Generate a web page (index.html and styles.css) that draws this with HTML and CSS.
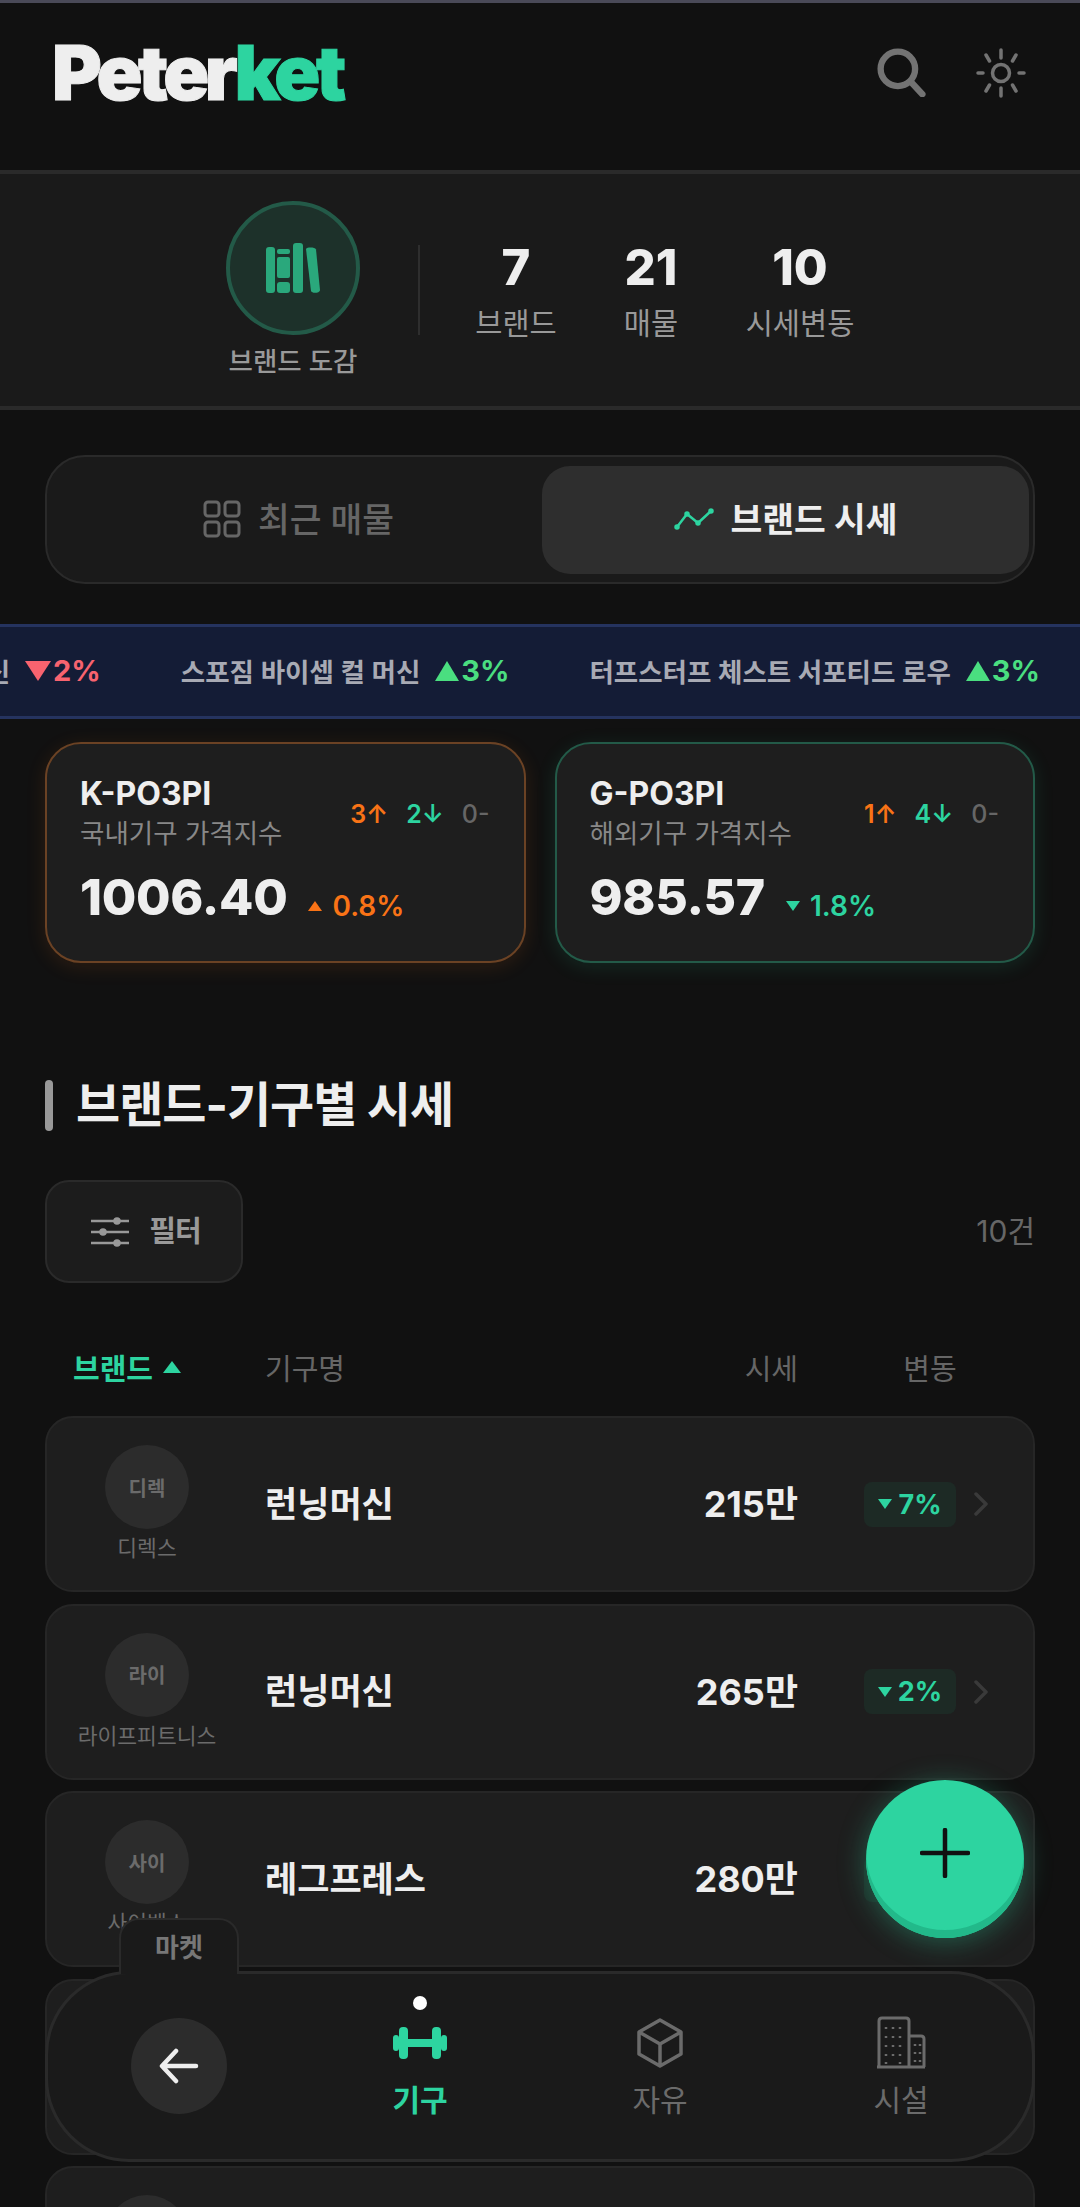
FILE: index.html
```html
<!DOCTYPE html>
<html lang="ko">
<head>
    <meta charset="UTF-8">
    <meta name="viewport" content="width=device-width, initial-scale=1.0">
    <title>Peterket</title>
    <link rel="stylesheet" href="styles.css">
</head>
<body>
<div class="page">
    <header class="header">
        <div class="logo">Peter<span>ket</span></div>
        <div class="header-icons">
            <svg class="search-icon" viewBox="0 0 54 54" fill="none" stroke="#737373" stroke-width="7" stroke-linecap="round"><circle cx="23" cy="23" r="19"/><path d="M38 38l12 13"/></svg>
            <svg class="sun-icon" viewBox="0 0 50 50" fill="none" stroke="#737373" stroke-width="3.500" stroke-linecap="round"><circle cx="25" cy="25" r="8.500"/><path d="M25 2v8M25 40v8M2 25h5M43 25h5M10 7l3.500 6M36.500 37l3.500 6M40 7l-3.500 6M13.500 37L10 43"/></svg>
        </div>
    </header>

    <section class="summary">
        <div class="book">
            <div class="book-circle">
                <svg viewBox="0 0 54 50" width="54" height="50" fill="#2aa87c"><rect x="0" y="4" width="9" height="46" rx="3"/><rect x="11" y="14" width="13" height="21" rx="2"/><rect x="11" y="39" width="13" height="11" rx="3"/><rect x="11" y="6" width="13" height="5" rx="2"/><rect x="27" y="0" width="10" height="50" rx="3"/><path d="M40 6c1-2 9-2 10 .5L54 47c.2 3-8 4-9 1z"/></svg>
            </div>
            <div class="book-label">브랜드 도감</div>
        </div>
        <div class="summary-line"></div>
        <div class="stats">
            <div class="stat stat-brand"><strong>7</strong><span>브랜드</span></div>
            <div class="stat stat-item"><strong>21</strong><span>매물</span></div>
            <div class="stat stat-price"><strong>10</strong><span>시세변동</span></div>
        </div>
    </section>

    <div class="tabs">
        <div class="tab">
            <svg viewBox="0 0 38 38" width="38" height="38" fill="none" stroke="#666" stroke-width="3"><rect x="2" y="2" width="14" height="14" rx="3"/><rect x="22" y="2" width="14" height="14" rx="3"/><rect x="2" y="22" width="14" height="14" rx="3"/><rect x="22" y="22" width="14" height="14" rx="3"/></svg>
            <span class="btn-text">최근 매물</span>
        </div>
        <div class="tab active">
            <svg viewBox="0 0 40 22" width="40" height="22" fill="none" stroke="#2dd4a0" stroke-width="2.500" stroke-linecap="round" stroke-linejoin="round"><path d="M3 19L13 6l11 9L37 3"/><circle cx="3" cy="19" r="1.500"/><circle cx="13" cy="6" r="1.500"/><circle cx="24" cy="15" r="1.500"/><circle cx="37" cy="3" r="1.500"/></svg>
            <span class="btn-text">브랜드 시세</span>
        </div>
    </div>

    <div class="ticker">
        <div class="ticker-track">
            <div class="ticker-item">레그 익스텐션 머신 <span class="red"><i class="tri-down"></i>2%</span></div>
            <div class="ticker-item">스포짐 바이셉 컬 머신 <span class="green"><i class="tri-up"></i>3%</span></div>
            <div class="ticker-item">터프스터프 체스트 서포티드 로우 <span class="green"><i class="tri-up"></i>3%</span></div>
        </div>
    </div>

    <div class="index-cards">
        <div class="index-card card-orange">
            <div class="card-top">
                <div>
                    <div class="card-name">K-PO3PI</div>
                    <div class="card-desc">국내기구 가격지수</div>
                </div>
                <div class="counts"><span class="orange">3↑</span><span class="mint">2↓</span><span class="gray">0-</span></div>
            </div>
            <div class="card-bottom">
                <div class="card-value">1006.40</div>
                <div class="card-change orange"><i class="mini-up"></i>0.8%</div>
            </div>
        </div>
        <div class="index-card card-green">
            <div class="card-top">
                <div>
                    <div class="card-name">G-PO3PI</div>
                    <div class="card-desc">해외기구 가격지수</div>
                </div>
                <div class="counts"><span class="orange">1↑</span><span class="mint">4↓</span><span class="gray">0-</span></div>
            </div>
            <div class="card-bottom">
                <div class="card-value">985.57</div>
                <div class="card-change mint"><i class="mini-down"></i>1.8%</div>
            </div>
        </div>
    </div>

    <h2 class="section-title">브랜드-기구별 시세</h2>

    <div class="filter-row">
        <div class="filter-btn">
            <svg viewBox="0 0 38 32" width="38" height="32" fill="#999" stroke="#999" stroke-width="2.500"><path d="M0 5h38M0 16h38M0 27h38" fill="none"/><circle cx="26" cy="5" r="2.500"/><circle cx="12" cy="16" r="2.500"/><circle cx="26" cy="27" r="2.500"/></svg>
            <span class="btn-text">필터</span>
        </div>
        <div class="count">10건</div>
    </div>

    <div class="table-head">
        <div class="col-brand sorted">브랜드 <i class="tri-up small"></i></div>
        <div class="col-name">기구명</div>
        <div class="col-price">시세</div>
        <div class="col-change">변동</div>
    </div>

    <div class="rows">
        <div class="row">
            <div class="brand"><div class="avatar">디렉</div><div class="brand-name">디렉스</div></div>
            <div class="row-name">런닝머신</div>
            <div class="row-price">215만</div>
            <div class="badge"><i class="mini-down"></i>7%</div>
            <svg class="chevron" viewBox="0 0 16 24" fill="none" stroke="#3a3a3a" stroke-width="3.500" stroke-linecap="round" stroke-linejoin="round"><path d="M3 2l10 10L3 22"/></svg>
        </div>
        <div class="row">
            <div class="brand"><div class="avatar">라이</div><div class="brand-name">라이프피트니스</div></div>
            <div class="row-name">런닝머신</div>
            <div class="row-price">265만</div>
            <div class="badge"><i class="mini-down"></i>2%</div>
            <svg class="chevron" viewBox="0 0 16 24" fill="none" stroke="#3a3a3a" stroke-width="3.500" stroke-linecap="round" stroke-linejoin="round"><path d="M3 2l10 10L3 22"/></svg>
        </div>
        <div class="row">
            <div class="brand"><div class="avatar">사이</div><div class="brand-name">사이벡스</div></div>
            <div class="row-name">레그프레스</div>
            <div class="row-price">280만</div>
            <div class="badge"><i class="mini-down"></i>2%</div>
            <svg class="chevron" viewBox="0 0 16 24" fill="none" stroke="#3a3a3a" stroke-width="3.500" stroke-linecap="round" stroke-linejoin="round"><path d="M3 2l10 10L3 22"/></svg>
        </div>
        <div class="row">
            <div class="brand"><div class="avatar">해머</div><div class="brand-name">해머스트렝스</div></div>
            <div class="row-name">체스트 프레스</div>
            <div class="row-price">310만</div>
            <div class="badge"><i class="mini-down"></i>1%</div>
        </div>
        <div class="row">
            <div class="brand"><div class="avatar">테크</div><div class="brand-name">테크노짐</div></div>
            <div class="row-name">런닝머신</div>
            <div class="row-price">420만</div>
            <div class="badge"><i class="mini-down"></i>1%</div>
        </div>
    </div>

    <div class="fab">
        <svg viewBox="0 0 50 50" width="50" height="50" stroke="#111" stroke-width="4.500" stroke-linecap="round"><path d="M25 2v46M2 25h46"/></svg>
    </div>

    <nav class="bottom-nav">
        <div class="nav-label">마켓</div>
        <div class="nav-back">
            <svg viewBox="0 0 40 36" width="40" height="36" fill="none" stroke="#eee" stroke-width="4.500" stroke-linecap="round" stroke-linejoin="round"><path d="M17 3L3 18l14 15M4 18h33"/></svg>
        </div>
        <div class="nav-item on">
            <i class="nav-dot"></i>
            <svg viewBox="0 -10 54 54" width="54" height="54" fill="#2dd4a0"><rect x="0" y="9" width="6" height="16" rx="3"/><rect x="6" y="1" width="9" height="32" rx="4"/><rect x="15" y="13" width="24" height="8"/><rect x="39" y="1" width="9" height="32" rx="4"/><rect x="48" y="9" width="6" height="16" rx="3"/></svg>
            <span>기구</span>
        </div>
        <div class="nav-item">
            <svg viewBox="0 -2 46 54" width="46" height="54" fill="none" stroke="#6b6b6b" stroke-width="3.500" stroke-linejoin="round"><path d="M23 2L44 14v22L23 48 2 36V14zM2 14l21 12 21-12M23 26v22"/></svg>
            <span>자유</span>
        </div>
        <div class="nav-item">
            <svg viewBox="0 0 50 54" width="50" height="54" fill="none" stroke="#6b6b6b" stroke-width="3"><path d="M3 51V5q0-3 3-3h24q3 0 3 3v46M33 20h12q3 0 3 3v28M1 51h48"/><path d="M10 11v2M17 11v2M24 11v2M10 20v2M17 20v2M24 20v2M10 29v2M17 29v2M24 29v2M10 38v2M17 38v2M24 38v2M10 46v2M24 46v2M39 28v2M44 28v2M39 36v2M44 36v2M39 44v2M44 44v2" stroke-width="2.500"/></svg>
            <span>시설</span>
        </div>
    </nav>
</div>
</body>
</html>
```

FILE: styles.css
```css
* {
    box-sizing: border-box;
}
html, body {
    margin: 0;
    padding: 0;
    background: #111111;
}
body {
    font-family: Inter, "Noto Sans CJK KR", sans-serif;
    color: #eeeeee;
}
i {
    display: inline-block;
}
.page {
    position: relative;
    width: 1080px;
    height: 2207px;
    overflow: hidden;
    border-top: 3px solid #4a4a58;
    background: #111111;
}
.header {
    height: 167px;
    padding: 27px 54px 0 52px;
    display: flex;
    justify-content: space-between;
    align-items: flex-start;
}
.logo {
    font-size: 76px;
    line-height: 84px;
    font-weight: 900;
    letter-spacing: -4.500px;
    color: #eeeeee;
    -webkit-text-stroke: 1px currentColor;
}
.logo span {
    color: #2dd4a0;
}
.header-icons {
    display: flex;
    gap: 50px;
    padding-top: 18px;
}
.search-icon {
    width: 49px;
    height: 49px;
}
.sun-icon {
    width: 50px;
    height: 50px;
}
.summary {
    height: 240px;
    background: #1a1a1a;
    border-top: 4px solid #2a2a2a;
    border-bottom: 4px solid #2a2a2a;
    display: flex;
    align-items: flex-start;
    padding: 27px 0 0 226px;
}
.book {
    width: 134px;
    display: flex;
    flex-direction: column;
    align-items: center;
}
.book-circle {
    width: 134px;
    height: 134px;
    border-radius: 50%;
    background: #1d312a;
    border: 4px solid #235a48;
    display: flex;
    align-items: center;
    justify-content: center;
}
.book-label {
    margin-top: 8px;
    font-size: 26.500px;
    line-height: 36px;
    font-weight: 500;
    color: #999999;
    white-space: nowrap;
}
.summary-line {
    width: 2px;
    height: 90px;
    margin: 44px 0 0 58px;
    background: #2e2e2e;
}
.stats {
    display: flex;
    padding-top: 37px;
}
.stat {
    display: flex;
    flex-direction: column;
    align-items: center;
    width: 0;
    white-space: nowrap;
}
.stat strong {
    font-size: 49px;
    line-height: 60px;
    font-weight: 800;
    color: #eeeeee;
}
.stat span {
    margin-top: 6px;
    font-size: 29.500px;
    line-height: 38px;
    font-weight: 400;
    color: #999999;
}
.stat-brand {
    margin-left: 96px;
}
.stat-item {
    margin-left: 135px;
}
.stat-price {
    margin-left: 149px;
}
.tabs {
    margin: 45px 45px 0;
    height: 129px;
    padding: 9px 4px 8px 8px;
    background: #1a1a1a;
    border: 2px solid #2a2a2a;
    border-radius: 40px;
    display: flex;
}
.tab {
    flex: 1;
    display: flex;
    align-items: center;
    justify-content: center;
    gap: 17px;
    font-size: 34.500px;
    font-weight: 500;
    color: #666666;
    border-radius: 28px;
}
.tab svg {
    margin-top: -2px;
}
.btn-text {
    padding-bottom: 6px;
}
.tab.active {
    background: #2e2e2e;
    color: #eeeeee;
    font-weight: 700;
}
.ticker {
    margin-top: 40px;
    height: 95px;
    background: #141c36;
    border-top: 3px solid #25335f;
    border-bottom: 3px solid #25335f;
    overflow: hidden;
}
.ticker-track {
    width: 1040px;
    height: 87px;
    display: flex;
    justify-content: flex-end;
    align-items: center;
    gap: 80px;
    white-space: nowrap;
}
.ticker-item {
    display: flex;
    align-items: center;
    gap: 15px;
    flex-shrink: 0;
    font-size: 26.500px;
    font-weight: 600;
    color: #a8aab4;
}
.ticker-item span {
    display: flex;
    align-items: center;
    gap: 2px;
    font-size: 29px;
    font-weight: 700;
}
.red {
    color: #f8636f;
}
.green {
    color: #4ade80;
}
.orange {
    color: #f97316;
}
.mint {
    color: #2dd4a0;
}
.gray {
    color: #666666;
}
.tri-up {
    width: 0;
    height: 0;
    border-left: 12px solid transparent;
    border-right: 12px solid transparent;
    border-bottom: 20px solid #4ade80;
}
.tri-down {
    width: 0;
    height: 0;
    border-left: 13px solid transparent;
    border-right: 13px solid transparent;
    border-top: 20px solid #f8636f;
}
.mini-up, .mini-down {
    width: 0;
    height: 0;
    border-left: 7px solid transparent;
    border-right: 7px solid transparent;
}
.mini-up {
    border-bottom: 10px solid #f97316;
}
.mini-down {
    border-top: 10px solid #2dd4a0;
}
.index-cards {
    margin: 23px 45px 0;
    display: flex;
    gap: 29px;
}
.index-card {
    flex: 1;
    height: 221px;
    padding: 32px 34px 0 33px;
    background: #1e1e1e;
    border-radius: 36px;
    border: 2px solid;
}
.card-orange {
    border-color: #6b4224;
    box-shadow: 0 4px 20px rgba(249, 115, 22, 0.12);
}
.card-green {
    border-color: #235a48;
    box-shadow: 0 4px 20px rgba(45, 212, 160, 0.12);
}
.card-top {
    display: flex;
    justify-content: space-between;
    align-items: center;
}
.card-name {
    font-size: 32px;
    line-height: 36px;
    font-weight: 700;
    color: #eeeeee;
}
.card-desc {
    margin-top: 3px;
    font-size: 26.500px;
    line-height: 36px;
    color: #888888;
}
.counts {
    display: flex;
    gap: 18px;
    font-size: 25px;
    font-weight: 600;
}
.counts .gray {
    font-weight: 500;
}
.card-bottom {
    margin-top: 14px;
    display: flex;
    align-items: center;
    gap: 21px;
}
.card-value {
    font-size: 50px;
    line-height: 64px;
    font-weight: 800;
    letter-spacing: -0.300px;
    color: #eeeeee;
}
.card-change {
    display: flex;
    align-items: center;
    gap: 10px;
    padding-top: 17px;
    font-size: 28px;
    font-weight: 600;
}
.section-title {
    margin: 117px 45px 0;
    padding-left: 31px;
    height: 52px;
    line-height: 50px;
    font-size: 48px;
    font-weight: 700;
    letter-spacing: -1px;
    color: #eeeeee;
    position: relative;
}
.section-title::before {
    content: "";
    position: absolute;
    left: 0;
    top: 0;
    width: 8px;
    height: 51px;
    border-radius: 4px;
    background: #999999;
}
.filter-row {
    margin: 48px 45px 0;
    display: flex;
    justify-content: space-between;
    align-items: center;
}
.filter-btn {
    width: 198px;
    height: 103px;
    padding-left: 4px;
    display: flex;
    align-items: center;
    justify-content: center;
    gap: 20px;
    background: #1c1c1c;
    border: 2px solid #2a2a2a;
    border-radius: 24px;
    font-size: 29px;
    letter-spacing: -1px;
    font-weight: 600;
    color: #999999;
}
.count {
    padding-bottom: 6px;
    font-size: 30px;
    color: #666666;
}
.table-head {
    margin: 65px 45px 0;
    height: 40px;
    padding-bottom: 3px;
    display: flex;
    align-items: center;
    font-size: 29px;
    color: #666666;
}
.col-brand {
    width: 220px;
    padding-left: 28px;
    display: flex;
    align-items: center;
    gap: 10px;
    font-weight: 600;
}
.sorted {
    color: #2dd4a0;
}
.tri-up.small {
    border-left-width: 9px;
    border-right-width: 9px;
    border-bottom: 12px solid #2dd4a0;
}
.col-name {
    flex: 1;
}
.col-price {
    width: 60px;
    margin-right: 104px;
    text-align: right;
}
.col-change {
    width: 56px;
    margin-right: 77px;
    text-align: center;
}
.rows {
    margin: 28px 45px 0;
    display: flex;
    flex-direction: column;
    gap: 11.500px;
}
.row {
    height: 176px;
    flex-shrink: 0;
    display: flex;
    align-items: center;
    background: #1e1e1e;
    border: 2px solid #262626;
    border-radius: 28px;
    position: relative;
}
.brand {
    width: 200px;
    margin-right: 18px;
    display: flex;
    flex-direction: column;
    align-items: center;
}
.avatar {
    width: 84px;
    height: 84px;
    border-radius: 50%;
    background: #2c2c2c;
    display: flex;
    align-items: center;
    justify-content: center;
    font-size: 20px;
    font-weight: 600;
    color: #6b6b6b;
}
.brand-name {
    margin-top: 4px;
    font-size: 21.500px;
    line-height: 30px;
    color: #6b6b6b;
    white-space: nowrap;
}
.row-name {
    flex: 1;
    padding-bottom: 6px;
    font-size: 35px;
    font-weight: 700;
    color: #eeeeee;
}
.row-price {
    padding-bottom: 6px;
    font-size: 36px;
    font-weight: 700;
    color: #eeeeee;
    margin-right: 66px;
}
.badge {
    width: 92px;
    height: 45px;
    margin-right: 77px;
    display: flex;
    align-items: center;
    justify-content: center;
    gap: 6px;
    background: #1d2a25;
    border-radius: 8px;
    font-size: 27px;
    font-weight: 700;
    color: #2dd4a0;
}
.chevron {
    position: absolute;
    right: 44px;
    top: 74px;
    width: 16px;
    height: 24px;
}
.fab {
    position: absolute;
    left: 866px;
    top: 1777px;
    width: 158px;
    height: 158px;
    border-radius: 50%;
    background: #2dd4a0;
    box-shadow: inset 0 -8px 0 #22b98a, 0 4px 28px rgba(45, 212, 160, 0.35);
    display: flex;
    align-items: center;
    justify-content: center;
    padding-bottom: 12px;
}
.bottom-nav {
    position: absolute;
    left: 45px;
    top: 1968px;
    width: 990px;
    height: 191px;
    background: #1a1a1a;
    border: 3px solid #2a2a2a;
    border-radius: 84px;
}
.nav-label {
    position: absolute;
    left: 71px;
    top: -56px;
    width: 120px;
    height: 56px;
    padding-bottom: 4px;
    background: #1a1a1a;
    border: 2px solid #2a2a2a;
    border-bottom: none;
    border-radius: 20px 20px 0 0;
    display: flex;
    align-items: center;
    justify-content: center;
    font-size: 26px;
    font-weight: 600;
    color: #777777;
}
.nav-back {
    position: absolute;
    left: 83px;
    top: 44px;
    width: 96px;
    height: 96px;
    border-radius: 50%;
    background: #2c2c2c;
    display: flex;
    align-items: center;
    justify-content: center;
}
.nav-item {
    position: absolute;
    top: 0;
    width: 120px;
    height: 100%;
    display: flex;
    flex-direction: column;
    align-items: center;
    justify-content: flex-end;
    padding-bottom: 39px;
    font-size: 30px;
    line-height: 40px;
    font-weight: 400;
    color: #6b6b6b;
}
.nav-item svg {
    margin-bottom: 10px;
}
.nav-item:nth-of-type(3) {
    left: 312px;
}
.nav-item:nth-of-type(4) {
    left: 552px;
}
.nav-item:nth-of-type(5) {
    left: 793px;
}
.nav-item.on {
    color: #2dd4a0;
    font-weight: 700;
}
.nav-dot {
    position: absolute;
    top: 22px;
    left: 53px;
    width: 14px;
    height: 14px;
    border-radius: 50%;
    background: #ffffff;
}
```
